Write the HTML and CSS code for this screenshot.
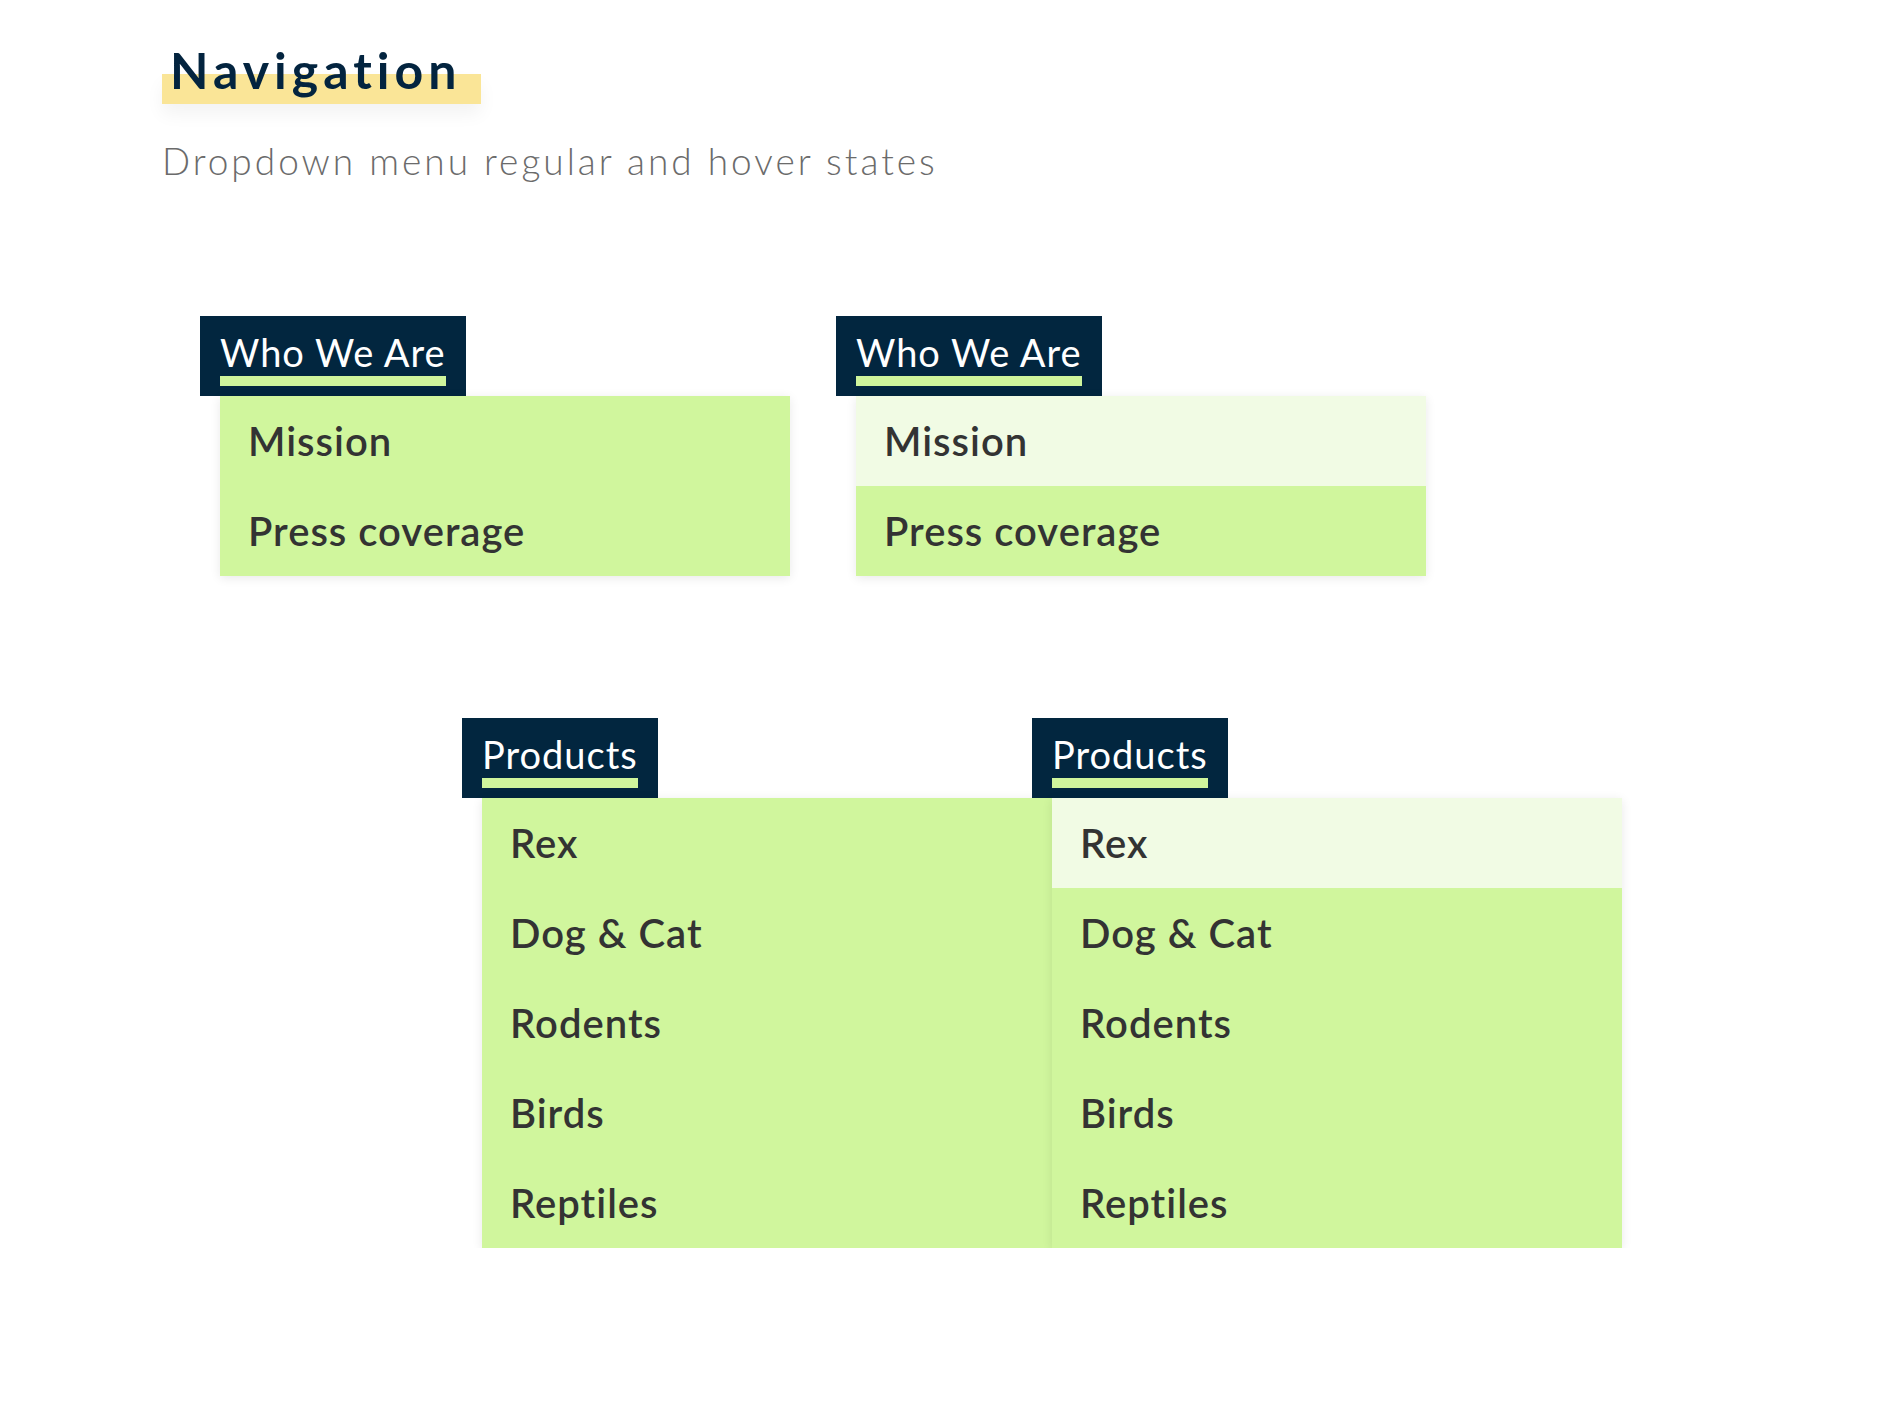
FILE: index.html
```html
<!DOCTYPE html>
<html lang="en">
<head>
<meta charset="utf-8">
<title>Navigation</title>
<link rel="stylesheet" href="styles.css">
</head>
<body>
<main class="page">
  <header class="intro">
    <h1 class="title"><span class="title-text">Navigation</span></h1>
    <p class="subtitle">Dropdown menu regular and hover states</p>
  </header>

  <section class="row row-first">
    <div class="dropdown">
      <div class="trigger"><span class="label">Who We Are</span></div>
      <ul class="menu">
        <li class="item">Mission</li>
        <li class="item">Press coverage</li>
      </ul>
    </div>
    <div class="dropdown dropdown-spaced">
      <div class="trigger"><span class="label">Who We Are</span></div>
      <ul class="menu">
        <li class="item item-hover">Mission</li>
        <li class="item">Press coverage</li>
      </ul>
    </div>
  </section>

  <section class="row row-second">
    <div class="dropdown">
      <div class="trigger"><span class="label">Products</span></div>
      <ul class="menu">
        <li class="item">Rex</li>
        <li class="item">Dog &amp; Cat</li>
        <li class="item">Rodents</li>
        <li class="item">Birds</li>
        <li class="item">Reptiles</li>
      </ul>
    </div>
    <div class="dropdown dropdown-adjacent">
      <div class="trigger"><span class="label">Products</span></div>
      <ul class="menu">
        <li class="item item-hover">Rex</li>
        <li class="item">Dog &amp; Cat</li>
        <li class="item">Rodents</li>
        <li class="item">Birds</li>
        <li class="item">Reptiles</li>
      </ul>
    </div>
  </section>
</main>
</body>
</html>
```

FILE: styles.css
```css
* { box-sizing: border-box; }

html, body {
  margin: 0;
  padding: 0;
  background: #ffffff;
}

body {
  font-family: Lato, "Open Sans", "DejaVu Sans", sans-serif;
  color: #333333;
}

.page {
  padding: 40px 0 0 162px;
}

.intro {
  display: flex;
  flex-direction: column;
  align-items: flex-start;
}

.title {
  position: relative;
  margin: 0;
  padding: 0 20px 0 8px;
  font-size: 50px;
  line-height: 60px;
  font-weight: 700;
  letter-spacing: 5px;
  color: #03243f;
}

.title::before {
  content: "";
  position: absolute;
  left: 0;
  right: 0;
  top: 34px;
  height: 30px;
  background: #fae597;
  box-shadow: 0 10px 18px rgba(0, 0, 0, 0.05);
}

.title-text {
  position: relative;
}

.subtitle {
  margin: 39px 0 0 0;
  font-size: 37px;
  line-height: 44px;
  font-weight: 300;
  letter-spacing: 3px;
  color: #6b6b6b;
}

.row {
  display: flex;
  align-items: flex-start;
}

.row-first {
  margin-top: 133px;
  padding-left: 38px;
}

.row-second {
  margin-top: 142px;
  padding-left: 300px;
}

.dropdown {
  display: flex;
  flex-direction: column;
  align-items: flex-start;
  position: relative;
}

.dropdown-spaced {
  margin-left: 46px;
}

.dropdown-adjacent {
  margin-left: -20px;
}

.trigger {
  height: 80px;
  padding: 14px 20px 10px 20px;
  background: #02263f;
}

.label {
  display: block;
  padding-bottom: 2px;
  font-size: 38px;
  line-height: 44px;
  font-weight: 400;
  letter-spacing: 1px;
  color: #ffffff;
  border-bottom: 10px solid #cff59c;
}

.menu {
  list-style: none;
  margin: 0 0 0 20px;
  padding: 0;
  width: 570px;
  background: #d0f69d;
  box-shadow: 0 2px 10px rgba(0, 0, 0, 0.09);
}

.item {
  display: flex;
  align-items: center;
  height: 90px;
  padding: 0 28px;
  font-size: 40px;
  font-weight: 600;
  letter-spacing: 1px;
  color: #333333;
}

.item-hover {
  background: #f1fbe4;
}
```
